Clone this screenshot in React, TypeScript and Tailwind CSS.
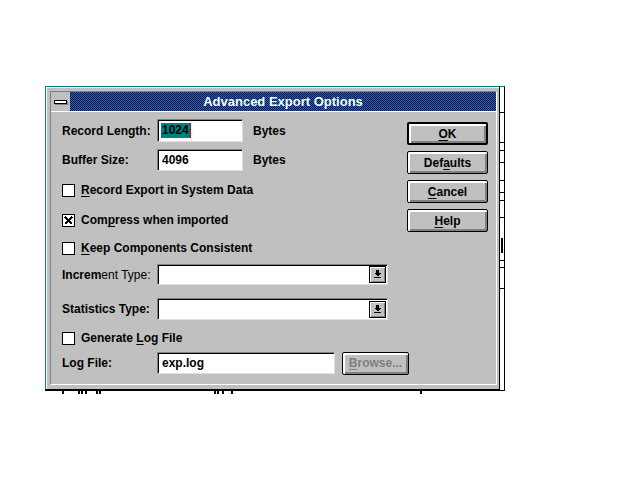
import type { ReactNode } from "react";

function U({ children }: { children: ReactNode }) {
  return <span className="underline decoration-1 underline-offset-[2px]">{children}</span>;
}

function Sunken({ className = "", children }: { className?: string; children?: ReactNode }) {
  return (
    <div
      className={`shrink-0 bg-white border border-t-[#808080] border-l-[#808080] border-r-[#dfdfdf] border-b-[#dfdfdf] shadow-[inset_1px_1px_0_#000] ${className}`}
    >
      {children}
    </div>
  );
}

function CheckBox({ checked = false, children }: { checked?: boolean; children: ReactNode }) {
  return (
    <div className="flex h-[13px] items-center">
      <div className="flex h-[13px] w-[13px] shrink-0 items-center justify-center border border-black bg-white">
        {checked && (
          <svg width="9" height="9" viewBox="0 0 9 9" shapeRendering="crispEdges">
            <path d="M1 1 L8 8 M8 1 L1 8" stroke="#000" strokeWidth="1.6" />
          </svg>
        )}
      </div>
      <span className="ml-[6px] leading-[13px]">{children}</span>
    </div>
  );
}

function PushButton({
  children,
  isDefault = false,
  disabled = false,
  className = "",
}: {
  children: ReactNode;
  isDefault?: boolean;
  disabled?: boolean;
  className?: string;
}) {
  return (
    <div
      className={`flex shrink-0 items-center justify-center rounded-[2px] bg-[#c0c0c0] ${
        isDefault ? "border-2" : "border"
      } border-black shadow-[inset_1px_1px_0_#fff,inset_2px_2px_0_#fff,inset_-1px_-1px_0_#808080,inset_-2px_-2px_0_#808080] ${
        disabled ? "text-[#808080]" : "text-black"
      } ${className}`}
    >
      {children}
    </div>
  );
}

function DropArrow() {
  return (
    <svg width="7" height="9" viewBox="0 0 7 9" shapeRendering="crispEdges">
      <rect x="2" y="0" width="3" height="3" fill="#000" />
      <polygon points="0,3 7,3 3.5,6.5" fill="#000" />
      <rect x="0" y="7" width="7" height="1" fill="#000" />
    </svg>
  );
}

function Combo({ className = "" }: { className?: string }) {
  return (
    <Sunken className={`flex items-center justify-end pr-[1px] ${className}`}>
      <div className="flex h-[17px] w-[17px] items-center justify-center border border-black bg-[#c0c0c0] shadow-[inset_1px_1px_0_#fff,inset_-1px_-1px_0_#808080]">
        <DropArrow />
      </div>
    </Sunken>
  );
}

// dithered caption, as win 3.1 draws it on 16 colour displays
function Dither() {
  return (
    <svg className="absolute inset-0 h-full w-full" shapeRendering="crispEdges">
      <defs>
        <pattern id="dither" width="2" height="2" patternUnits="userSpaceOnUse">
          <rect width="2" height="2" fill="#008080" />
          <rect x="0" y="0" width="1" height="1" fill="#000080" />
          <rect x="1" y="1" width="1" height="1" fill="#000080" />
        </pattern>
      </defs>
      <rect width="100%" height="100%" fill="url(#dither)" />
    </svg>
  );
}

export default function App() {
  const ticks = [112, 142, 150, 162, 180, 192, 200, 217, 260, 267, 288];
  const bottomMarks = [62, 78, 81, 85, 96, 99, 214, 217, 222, 231, 420];

  return (
    <div className="relative h-[480px] w-[640px] overflow-hidden bg-white font-['Liberation_Sans',Arial,sans-serif] text-[12px] font-bold text-black">
      {/* window behind the dialog */}
      <div className="absolute left-[45px] top-[86px] h-[305px] w-[460px] border-t border-r border-b border-t-[#008080] border-r-black border-b-black bg-white" />
      {ticks.map((y) => (
        <div key={y} className="absolute left-[500px] h-px w-[4px] bg-black" style={{ top: y }} />
      ))}
      <div className="absolute left-[501px] top-[238px] h-[15px] w-[2px] bg-black" />
      {bottomMarks.map((x) => (
        <div key={x} className="absolute top-[391px] h-[3px] w-[2px] bg-black" style={{ left: x }} />
      ))}

      {/* dialog */}
      <div className="absolute left-[45px] top-[86px] flex h-[304px] w-[455px] flex-col border border-t-[#008080] border-l-[#008080] border-r-black border-b-black bg-[#c0c0c0] pt-[4px] pl-[4px] pr-[2px] pb-[4px] shadow-[inset_1px_1px_0_#fff]">
        <div className="flex flex-1 flex-col border border-t-[#808080] border-l-[#808080] border-r-white border-b-white">
          {/* title bar */}
          <div className="flex h-[19px] shrink-0">
            <div className="flex w-[19px] items-center justify-center bg-[#c0c0c0]">
              <div className="h-[4px] w-[13px] border border-black bg-white shadow-[1px_1px_0_#808080]" />
            </div>
            <div className="relative flex flex-1 items-center justify-center text-[13px] leading-none text-white">
              <Dither />
              <span className="relative">Advanced Export Options</span>
            </div>
          </div>
          <div className="h-px shrink-0 bg-white" />

          {/* client */}
          <div className="flex flex-1 pl-[11px]">
            <div className="flex w-[345px] shrink-0 flex-col">
              <div className="mt-[7px] flex h-[23px] items-center">
                <span className="w-[95px] shrink-0">Record Length:</span>
                <Sunken className="flex h-[23px] w-[86px] items-center pl-[3px]">
                  <span className="bg-[#008080] px-px leading-[15px]">1024</span>
                  <span className="h-[15px] w-px bg-[#e00000]" />
                </Sunken>
                <span className="ml-[10px]">Bytes</span>
              </div>
              <div className="mt-[7px] flex h-[22px] items-center">
                <span className="w-[95px] shrink-0">Buffer Size:</span>
                <Sunken className="flex h-[22px] w-[86px] items-center pl-[4px]">4096</Sunken>
                <span className="ml-[10px]">Bytes</span>
              </div>

              <div className="mt-[13px]">
                <CheckBox>
                  <U>R</U>ecord Export in System Data
                </CheckBox>
              </div>
              <div className="mt-[17px]">
                <CheckBox checked>
                  Com<U>p</U>ress when imported
                </CheckBox>
              </div>
              <div className="mt-[15px]">
                <CheckBox>
                  <U>K</U>eep Components Consistent
                </CheckBox>
              </div>

              <div className="mt-[9px] flex h-[21px] items-center">
                <span className="w-[95px] shrink-0">
                  Increm<span className="font-normal">ent Type:</span>
                </span>
                <Combo className="h-[21px] w-[231px]" />
              </div>
              <div className="mt-[13px] flex h-[22px] items-center">
                <span className="w-[95px] shrink-0">Statistics Type:</span>
                <Combo className="h-[22px] w-[231px]" />
              </div>

              <div className="mt-[12px]">
                <CheckBox>
                  Generate <U>L</U>og File
                </CheckBox>
              </div>

              <div className="mt-[7px] flex h-[22px] items-center">
                <span className="w-[95px] shrink-0">Log File:</span>
                <Sunken className="flex h-[22px] w-[178px] items-center pl-[4px]">exp.log</Sunken>
                <PushButton disabled className="ml-[7px] h-[23px] w-[67px]">
                  <U>B</U>rowse...
                </PushButton>
              </div>
            </div>

            <div className="mt-[10px] flex w-[81px] shrink-0 flex-col gap-[6px]">
              <PushButton isDefault className="h-[23px] w-[81px]">
                <U>O</U>K
              </PushButton>
              <PushButton className="h-[23px] w-[81px]">
                Def<U>a</U>ults
              </PushButton>
              <PushButton className="h-[23px] w-[81px]">
                <U>C</U>ancel
              </PushButton>
              <PushButton className="h-[23px] w-[81px]">
                <U>H</U>elp
              </PushButton>
            </div>
          </div>
        </div>
      </div>
    </div>
  );
}
